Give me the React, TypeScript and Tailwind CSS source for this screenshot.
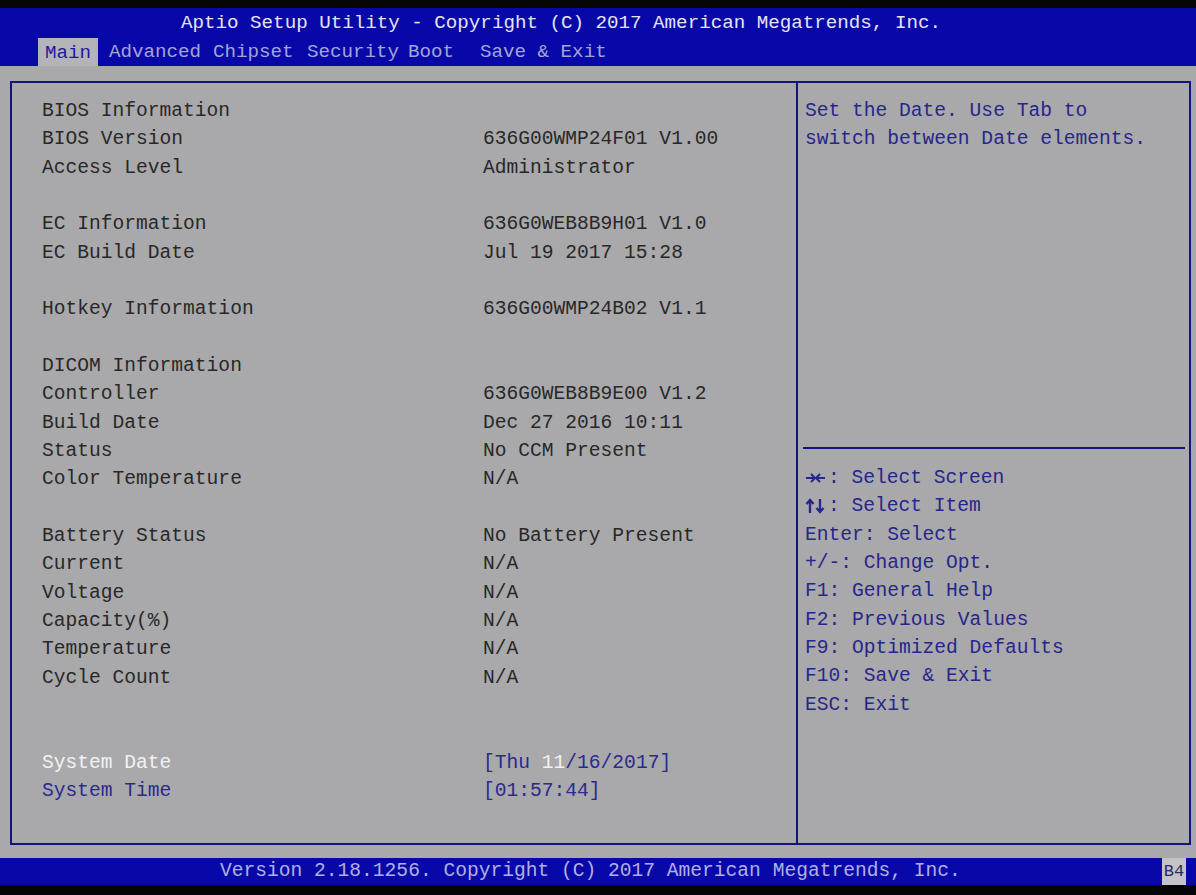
import React from "react";

const FONT = "font-['Liberation_Mono','DejaVu_Sans_Mono',monospace]";

type Row = { l: string; v?: string } | null;

const rows: Row[] = [
  { l: "BIOS Information" },
  { l: "BIOS Version", v: "636G00WMP24F01 V1.00" },
  { l: "Access Level", v: "Administrator" },
  null,
  { l: "EC Information", v: "636G0WEB8B9H01 V1.0" },
  { l: "EC Build Date", v: "Jul 19 2017 15:28" },
  null,
  { l: "Hotkey Information", v: "636G00WMP24B02 V1.1" },
  null,
  { l: "DICOM Information" },
  { l: "Controller", v: "636G0WEB8B9E00 V1.2" },
  { l: "Build Date", v: "Dec 27 2016 10:11" },
  { l: "Status", v: "No CCM Present" },
  { l: "Color Temperature", v: "N/A" },
  null,
  { l: "Battery Status", v: "No Battery Present" },
  { l: "Current", v: "N/A" },
  { l: "Voltage", v: "N/A" },
  { l: "Capacity(%)", v: "N/A" },
  { l: "Temperature", v: "N/A" },
  { l: "Cycle Count", v: "N/A" },
  null,
  null,
];

const keys = [
  "Enter: Select",
  "+/-: Change Opt.",
  "F1: General Help",
  "F2: Previous Values",
  "F9: Optimized Defaults",
  "F10: Save & Exit",
  "ESC: Exit",
];

function LeftRight() {
  return (
    <svg width="23" height="28" viewBox="0 0 23 28" className="shrink-0">
      <g stroke="#26268c" strokeWidth="2" fill="none">
        <line x1="1" y1="14" x2="10" y2="14" />
        <polyline points="6,10 10,14 6,18" />
        <line x1="11" y1="14" x2="20" y2="14" />
        <polyline points="15,10 11,14 15,18" />
      </g>
    </svg>
  );
}

function UpDown() {
  return (
    <svg width="23" height="28" viewBox="0 0 23 28" className="shrink-0">
      <g stroke="#26268c" strokeWidth="2.4" fill="none">
        <line x1="5" y1="8" x2="5" y2="21" />
        <polyline points="1.5,12 5,8 8.5,12" />
        <line x1="15" y1="7" x2="15" y2="20" />
        <polyline points="11.5,16 15,20 18.5,16" />
      </g>
    </svg>
  );
}

export default function App() {
  return (
    <div
      className={`w-[1196px] h-[895px] bg-[#050505] flex flex-col overflow-hidden ${FONT} text-[19.6px] leading-[28.33px] whitespace-pre`}
    >
      <div className="h-[8px] shrink-0" />
      {/* Header */}
      <div className="h-[58px] shrink-0 bg-[#0808a8] flex flex-col">
        <div className="h-[30px] pt-[1px] pl-[181px] text-[19.2px] leading-[28px] text-[#e4e4f0]">
          Aptio Setup Utility - Copyright (C) 2017 American Megatrends, Inc.
        </div>
        <div className="h-[28px] flex items-center pl-[38px] text-[19.2px] leading-[30px] text-[#a4a4d8]">
          <span className="w-[60px] h-[28px] pl-[7px] bg-[#b4b4b8] text-[#1a1aa0]">Main</span>
          <span className="ml-[11px] w-[104px]">Advanced</span>
          <span className="w-[94px]">Chipset</span>
          <span className="w-[101px]">Security</span>
          <span className="w-[72px]">Boot</span>
          <span>Save &amp; Exit</span>
        </div>
      </div>
      {/* Body */}
      <div className="h-[792px] shrink-0 bg-[#a9a9ab] flex flex-col pt-[15px] pb-[13px] pl-[10px] pr-[5px]">
        <div className="flex-1 flex border-2 border-[#14147c]">
          {/* Left panel */}
          <div className="w-[786px] border-r-2 border-[#14147c] flex flex-col pt-[14px] pl-[30px] text-[#282828]">
            {rows.map((r, i) =>
              r ? (
                <div key={i} className="flex h-[28.33px]">
                  <span className="w-[441px]">{r.l}</span>
                  {r.v && <span>{r.v}</span>}
                </div>
              ) : (
                <div key={i} className="h-[28.33px]" />
              )
            )}
            <div className="flex h-[28.33px]">
              <span className="w-[441px] text-[#f2f2f2]">System Date</span>
              <span className="text-[#2a2a90]">
                [Thu <span className="text-[#f2f2f2]">11</span>/16/2017]
              </span>
            </div>
            <div className="flex h-[28.33px] text-[#2a2a90]">
              <span className="w-[441px]">System Time</span>
              <span>[01:57:44]</span>
            </div>
          </div>
          {/* Right panel */}
          <div className="flex-1 flex flex-col text-[#26268c]">
            <div className="h-[364px] pt-[14px] pl-[7px]">
              <div>Set the Date. Use Tab to</div>
              <div>switch between Date elements.</div>
            </div>
            <div className="h-[2px] bg-[#14147c] ml-[5px] mr-[4px]" />
            <div className="pt-[15px] pl-[7px] flex flex-col">
              <div className="h-[28.33px] flex items-center">
                <LeftRight />
                <span>: Select Screen</span>
              </div>
              <div className="h-[28.33px] flex items-center">
                <UpDown />
                <span>: Select Item</span>
              </div>
              {keys.map((k) => (
                <div key={k} className="h-[28.33px]">
                  {k}
                </div>
              ))}
            </div>
          </div>
        </div>
      </div>
      {/* Footer */}
      <div className="h-[27px] shrink-0 bg-[#0808a8] flex items-center text-[#b0b0e4]">
        <div className="flex-1 pl-[220px] leading-[27px]">
          Version 2.18.1256. Copyright (C) 2017 American Megatrends, Inc.
        </div>
        <div className="w-[24px] h-[27px] bg-[#c4c4c8] text-[#2a2a6a] text-[17px] leading-[27px] flex items-center justify-center">
          B4
        </div>
        <div className="w-[10px]" />
      </div>
      <div className="h-[10px] shrink-0" />
    </div>
  );
}
